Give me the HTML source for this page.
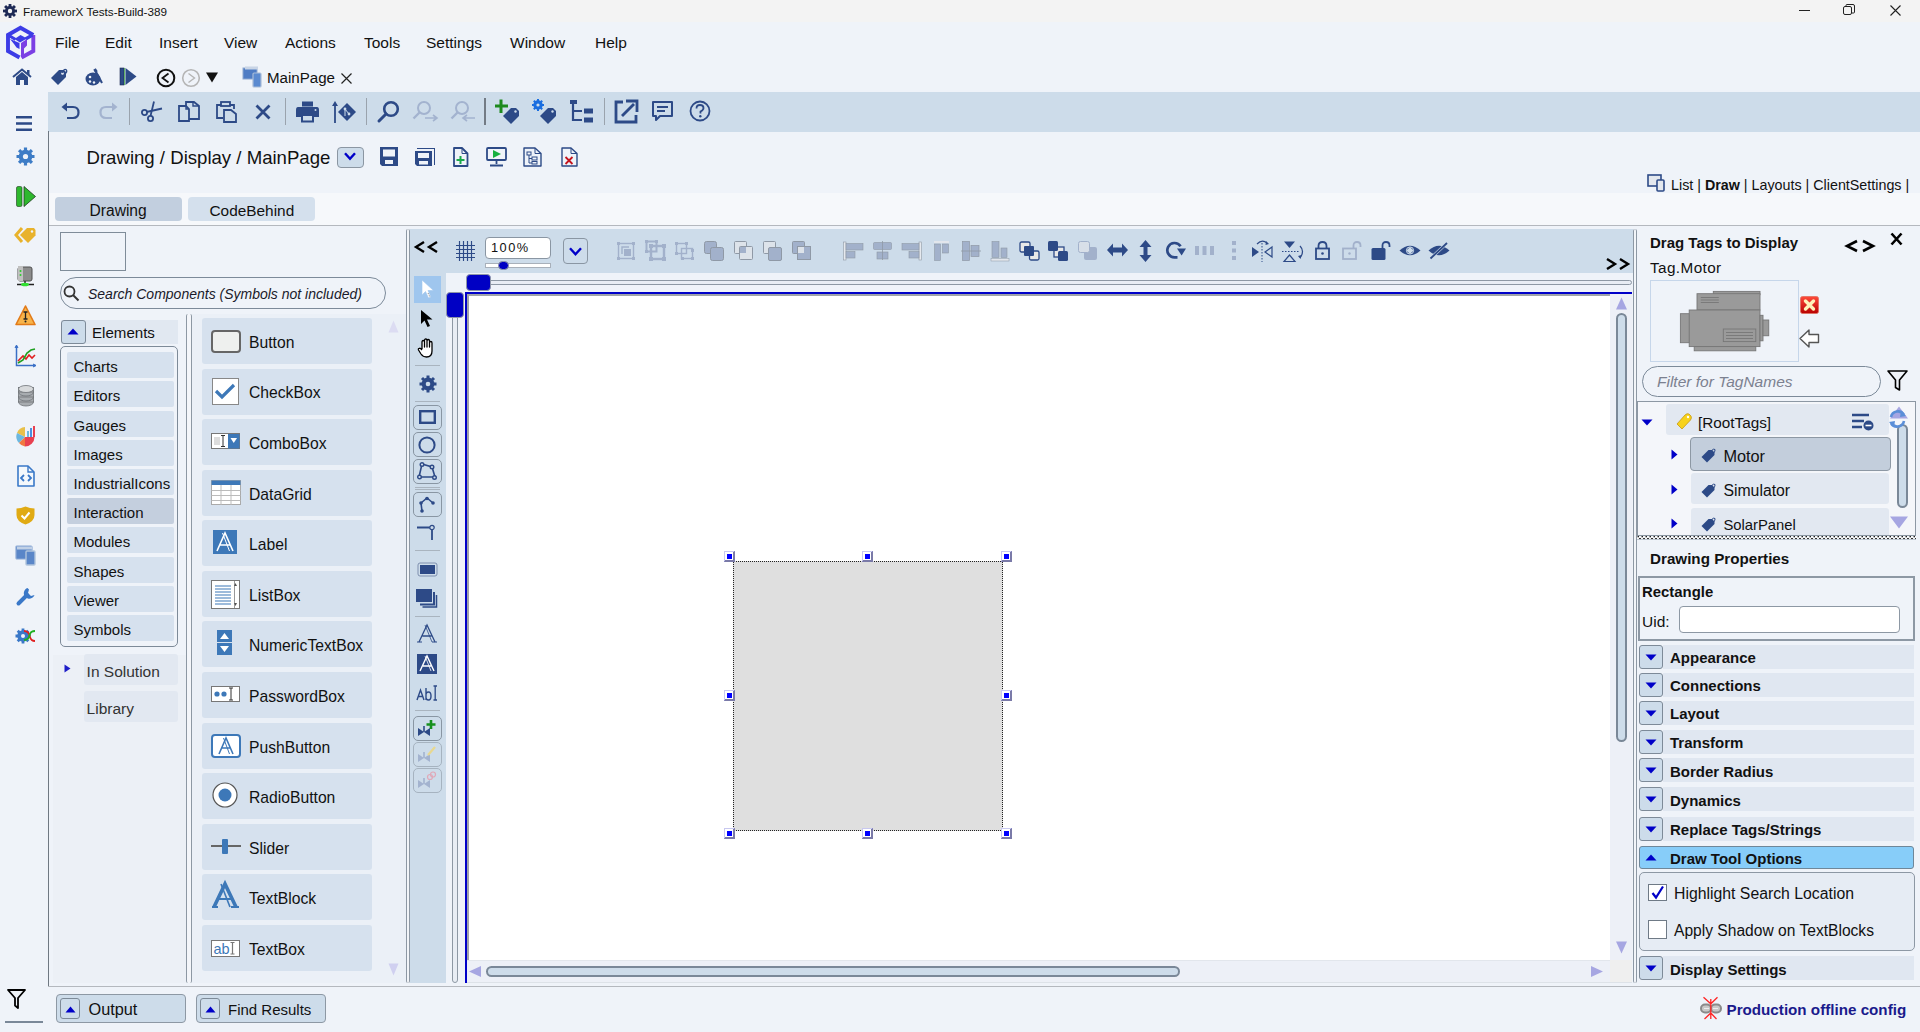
<!DOCTYPE html>
<html><head><meta charset="utf-8"><title>FrameworX</title>
<style>
html,body{margin:0;padding:0;}
body{width:1920px;height:1032px;position:relative;overflow:hidden;background:#eff3f9;font-family:"Liberation Sans",sans-serif;color:#111;}
body>*{position:absolute;}
.t{line-height:1;white-space:nowrap;}
svg{overflow:visible;}
</style></head><body>
<div style="left:0px;top:0px;width:1920px;height:22px;background:#f3f3f3"></div>
<div style="left:0px;top:22px;width:1920px;height:1010px;background:#eff3f9"></div>
<div style="left:48px;top:92px;width:1872px;height:40px;background:#cddcea"></div>
<div style="left:48px;top:193px;width:1872px;height:32px;background:#f6f8fb"></div>
<div style="left:48px;top:225px;width:1872px;height:1px;background:#b4b8be"></div>
<div style="left:48px;top:131px;width:1px;height:855px;background:#6f7882"></div>
<div style="left:48px;top:986px;width:1872px;height:1px;background:#b4b8be"></div>
<div class="t" style="left:23px;top:6.09px;font-size:11.7px;color:#111">FrameworX Tests-Build-389</div>
<svg style="left:3px;top:4px" width="14" height="14" viewBox="0 0 14 14"><g fill="#1e2a55"><circle cx="7" cy="7" r="5"/><rect x="5.6" y="0" width="2.8" height="14"/><rect x="0" y="5.6" width="14" height="2.8"/><rect x="5.6" y="0" width="2.8" height="14" transform="rotate(45 7 7)"/><rect x="5.6" y="0" width="2.8" height="14" transform="rotate(-45 7 7)"/></g><circle cx="7" cy="7" r="2.2" fill="#f3f3f3"/></svg>
<div style="left:1799px;top:10px;width:11px;height:1px;background:#222"></div>
<svg style="left:1843px;top:4px" width="12" height="12" viewBox="0 0 12 12"><rect x="0.5" y="2.5" width="8" height="8" rx="1.5" fill="none" stroke="#222"/><path d="M3 2.5 V1.5 Q3 0.5 4 0.5 H10 Q11.5 0.5 11.5 2 V8 Q11.5 9 10.5 9 H9" fill="none" stroke="#222"/></svg>
<svg style="left:1890px;top:5px" width="11" height="11" viewBox="0 0 11 11"><path d="M0.5 0.5 L10.5 10.5 M10.5 0.5 L0.5 10.5" stroke="#222" stroke-width="1.1"/></svg>
<div class="t" style="left:55px;top:34.88px;font-size:15.5px;">File</div>
<div class="t" style="left:105px;top:34.88px;font-size:15.5px;">Edit</div>
<div class="t" style="left:159px;top:34.88px;font-size:15.5px;">Insert</div>
<div class="t" style="left:224px;top:34.88px;font-size:15.5px;">View</div>
<div class="t" style="left:285px;top:34.88px;font-size:15.5px;">Actions</div>
<div class="t" style="left:364px;top:34.88px;font-size:15.5px;">Tools</div>
<div class="t" style="left:426px;top:34.88px;font-size:15.5px;">Settings</div>
<div class="t" style="left:510px;top:34.88px;font-size:15.5px;">Window</div>
<div class="t" style="left:595px;top:34.88px;font-size:15.5px;">Help</div>
<svg style="left:0px;top:22px" width="42" height="40" viewBox="0 0 42 40"><g fill="none" stroke-width="3.9" stroke-linejoin="miter"><path d="M19.5 35.5 L8 29 V13 L20.5 5.8 L33.3 13" stroke="#3c3ce6"/><path d="M21.5 35.5 L33.3 29 V13" stroke="#7b3fe4"/><path d="M9 13.5 L15.5 17.5" stroke="#3c3ce6" stroke-width="3.2"/><path d="M25.5 17 L32.5 13" stroke="#3c3ce6" stroke-width="3.2"/></g><path d="M14.5 17 L20.5 13 L27 16.5 L20 20.5 Z" fill="#3c3ce6"/><path d="M10 17 L19.5 21 V27 L16.5 25.5 L14 22 Z" fill="#3c3ce6"/><path d="M21 21 L27 17 V23.5 L24 26.5 V34 L21 35.5 Z" fill="#7b3fe4"/></svg>
<svg style="left:12px;top:68px" width="20" height="18" viewBox="0 0 20 18"><path d="M1 9 L10 1.5 L19 9" fill="none" stroke="#2d4a87" stroke-width="2"/><path d="M4 9 L10 4 L16 9 V17 H12 V12 H8 V17 H4 Z" fill="#2d4a87"/><rect x="15" y="2" width="2.5" height="5" fill="#2d4a87"/></svg>
<svg style="left:50px;top:68px" width="18" height="18" viewBox="0 0 18 18"><path d="M1 10 L9 2 H14 L16 4 V9 L8 17 Z" fill="#2d4a87"/><circle cx="12.5" cy="5.5" r="1.3" fill="#eff3f9"/><path d="M12 5 Q14 0 16.5 2 Q17.5 4 15 6" fill="none" stroke="#2d4a87" stroke-width="1.2"/></svg>
<svg style="left:85px;top:68px" width="18" height="18" viewBox="0 0 18 18"><ellipse cx="8" cy="11" rx="7.5" ry="6.5" fill="#2d4a87"/><circle cx="5" cy="9" r="1.3" fill="#eff3f9"/><circle cx="5" cy="13.5" r="1.2" fill="#eff3f9"/><circle cx="9" cy="14.5" r="1.2" fill="#eff3f9"/><path d="M10 2 L17 15" stroke="#2d4a87" stroke-width="2"/><path d="M9.5 1 L11.5 4" stroke="#2d4a87" stroke-width="3"/></svg>
<svg style="left:120px;top:68px" width="17" height="17" viewBox="0 0 17 17"><rect x="0" y="0" width="4" height="17" fill="#2d4a87" stroke="#1a2a50" stroke-width="0.6"/><rect x="4.3" y="0" width="0.8" height="17" fill="#40b040"/><path d="M5.5 0 L16.5 8.5 L5.5 17 Z" fill="#2d4a87"/></svg>
<svg style="left:156px;top:68px" width="20" height="20" viewBox="0 0 20 20"><circle cx="10" cy="10" r="8.3" fill="none" stroke="#111" stroke-width="2"/><path d="M12.5 5.5 L6.5 10 L12.5 14.5" fill="none" stroke="#111" stroke-width="1.8"/></svg>
<svg style="left:181px;top:68px" width="20" height="20" viewBox="0 0 20 20"><circle cx="10" cy="10" r="8.3" fill="none" stroke="#b5b5b5" stroke-width="1.6"/><path d="M7.5 5.5 L13.5 10 L7.5 14.5" fill="none" stroke="#b5b5b5" stroke-width="1.4"/></svg>
<svg style="left:206px;top:72px" width="12" height="11" viewBox="0 0 12 11"><path d="M0 0.5 H12 L6 10.5 Z" fill="#111"/></svg>
<svg style="left:242px;top:66px" width="21" height="22" viewBox="0 0 21 22"><rect x="1" y="2" width="14" height="11" fill="#4f7cc4" stroke="#8da7d0"/><rect x="3" y="0.5" width="13" height="3" fill="#c8d4e6"/><rect x="11" y="7" width="8" height="14" rx="1" fill="#5b8ad0" stroke="#a8bcd8" stroke-width="1.2"/></svg>
<div class="t" style="left:267px;top:70.21px;font-size:15.1px;">MainPage</div>
<svg style="left:341px;top:73px" width="11" height="11" viewBox="0 0 11 11"><path d="M0.5 0.5 L10.5 10.5 M10.5 0.5 L0.5 10.5" stroke="#222" stroke-width="1.2"/></svg>
<svg style="left:61px;top:102px" width="19" height="17" viewBox="0 0 19 17"><path d="M4 5 H12 Q17.5 5 17.5 10.5 Q17.5 16 12 16 H6" fill="none" stroke="#2d4a87" stroke-width="2.2"/><path d="M0.5 5 L6 0.5 V9.5 Z" fill="#2d4a87"/></svg>
<svg style="left:99px;top:102px" width="19" height="17" viewBox="0 0 19 17"><path d="M15 5 H7 Q1.5 5 1.5 10.5 Q1.5 16 7 16 H13" fill="none" stroke="#a3b3cf" stroke-width="2.2"/><path d="M18.5 5 L13 0.5 V9.5 Z" fill="#a3b3cf"/></svg>
<div style="left:129px;top:98px;width:1px;height:27px;background:#9aa3ad"></div>
<svg style="left:141px;top:101px" width="22" height="21" viewBox="0 0 22 21"><circle cx="3.5" cy="11.5" r="2.6" fill="none" stroke="#2d4a87" stroke-width="1.8"/><circle cx="9.5" cy="17.5" r="2.6" fill="none" stroke="#2d4a87" stroke-width="1.8"/><path d="M5.5 11 L21 7.5 M9.5 15 L13 0.5" stroke="#2d4a87" stroke-width="1.8"/></svg>
<svg style="left:178px;top:101px" width="22" height="21" viewBox="0 0 22 21"><path d="M1 5 H8 L11 8 V20 H1 Z" fill="none" stroke="#2d4a87" stroke-width="1.8"/><path d="M8 5 V8 H11" fill="none" stroke="#2d4a87" stroke-width="1.4"/><path d="M8 5 V1 H16 L21 5 V18 H11" fill="none" stroke="#2d4a87" stroke-width="1.8"/><path d="M15 1 V5 H21" fill="none" stroke="#2d4a87" stroke-width="1.4"/></svg>
<svg style="left:216px;top:101px" width="22" height="22" viewBox="0 0 22 22"><path d="M5 4 H1 V17 H7" fill="none" stroke="#2d4a87" stroke-width="1.8"/><rect x="5" y="1" width="9" height="4" fill="none" stroke="#2d4a87" stroke-width="1.8"/><path d="M14 4 H18 V8" fill="none" stroke="#2d4a87" stroke-width="1.8"/><path d="M8 9 H15 L20 13 V21 H8 Z" fill="none" stroke="#2d4a87" stroke-width="1.8"/></svg>
<svg style="left:255px;top:104px" width="16" height="16" viewBox="0 0 16 16"><path d="M1.5 1.5 L14.5 14.5 M14.5 1.5 L1.5 14.5" stroke="#2d4a87" stroke-width="2.8"/></svg>
<div style="left:285px;top:98px;width:1px;height:27px;background:#9aa3ad"></div>
<svg style="left:296px;top:101px" width="23" height="21" viewBox="0 0 23 21"><rect x="6" y="0.5" width="11" height="5" fill="#2d4a87"/><path d="M2 6 H21 Q23 6 23 9 V16 H18 V13 H5 V16 H0 V9 Q0 6 2 6 Z" fill="#2d4a87"/><rect x="6" y="14" width="11" height="6.5" fill="none" stroke="#2d4a87" stroke-width="2"/><circle cx="19.5" cy="9" r="1" fill="#cddcea"/></svg>
<svg style="left:332px;top:101px" width="25" height="22" viewBox="0 0 25 22"><path d="M3 22 V3" stroke="#2d4a87" stroke-width="1.8"/><path d="M0 5 L3 0 L6 5 Z" fill="#2d4a87"/><path d="M15 2 L24 11 L15 20 L6 11 Z" fill="#2d4a87"/><circle cx="13" cy="8" r="1.4" fill="#cddcea"/><circle cx="17" cy="13" r="1.4" fill="#cddcea"/><path d="M13 8 V15 M13 8 L17 13" stroke="#cddcea" stroke-width="1"/></svg>
<div style="left:366px;top:98px;width:1px;height:27px;background:#9aa3ad"></div>
<svg style="left:377px;top:100px" width="23" height="23" viewBox="0 0 23 23"><circle cx="14" cy="9" r="6.8" fill="none" stroke="#2d4a87" stroke-width="2.6"/><path d="M9 14 L2 21" stroke="#2d4a87" stroke-width="3" stroke-linecap="round"/></svg>
<svg style="left:412px;top:100px" width="27" height="23" viewBox="0 0 27 23"><circle cx="12" cy="8" r="6" fill="none" stroke="#a3b3cf" stroke-width="2"/><path d="M7.5 12.5 L1.5 18.5" stroke="#a3b3cf" stroke-width="2.4"/><path d="M13 18 H24 M21 15 L25 18 L21 21" fill="none" stroke="#a3b3cf" stroke-width="1.6"/></svg>
<svg style="left:450px;top:100px" width="27" height="23" viewBox="0 0 27 23"><circle cx="12" cy="8" r="6" fill="none" stroke="#a3b3cf" stroke-width="2"/><path d="M7.5 12.5 L1.5 18.5" stroke="#a3b3cf" stroke-width="2.4"/><path d="M14 18 H25 M17 15 L13 18 L17 21" fill="none" stroke="#a3b3cf" stroke-width="1.6"/></svg>
<div style="left:484px;top:98px;width:2px;height:27px;background:#737b85"></div>
<svg style="left:495px;top:99px" width="25" height="26" viewBox="0 0 25 26"><path d="M6 0.5 V14 M0 7 H13" stroke="#1e8a1e" stroke-width="3"/><path d="M8 17 L16 9 H21 L24 12 V17 L16 25 Z" fill="#2d4a87"/><circle cx="20.5" cy="12.5" r="1.2" fill="#cddcea"/></svg>
<svg style="left:532px;top:99px" width="25" height="26" viewBox="0 0 25 26"><circle cx="6" cy="6" r="3.4" fill="none" stroke="#1a6ee0" stroke-width="2.6"/><g stroke="#1a6ee0" stroke-width="2"><path d="M6 0 V12 M0 6 H12 M1.8 1.8 L10.2 10.2 M10.2 1.8 L1.8 10.2"/></g><circle cx="6" cy="6" r="1.6" fill="#cddcea"/><path d="M8 17 L16 9 H21 L24 12 V17 L16 25 Z" fill="#2d4a87"/><circle cx="20.5" cy="12.5" r="1.2" fill="#cddcea"/></svg>
<svg style="left:570px;top:100px" width="24" height="23" viewBox="0 0 24 23"><rect x="0" y="0" width="7" height="4" fill="#2d4a87"/><path d="M3 4 V20 H12 M3 11 H12" fill="none" stroke="#2d4a87" stroke-width="2.2"/><rect x="14" y="8.5" width="9" height="5" fill="#2d4a87"/><rect x="14" y="17.5" width="9" height="5" fill="#2d4a87"/></svg>
<div style="left:604px;top:98px;width:1px;height:27px;background:#9aa3ad"></div>
<svg style="left:614px;top:100px" width="24" height="24" viewBox="0 0 24 24"><path d="M9 2 H2 V22 H22 V15" fill="none" stroke="#2d4a87" stroke-width="2.8"/><path d="M8 16 L20 4" stroke="#2d4a87" stroke-width="2.8"/><path d="M12 1 H23 V12" fill="none" stroke="#2d4a87" stroke-width="2.8"/></svg>
<svg style="left:651px;top:101px" width="23" height="21" viewBox="0 0 23 21"><path d="M2 1 H21 V15 H9 L5 19 V15 H2 Z" fill="none" stroke="#2d4a87" stroke-width="2" stroke-linejoin="round"/><path d="M6 6 H17 M6 10 H14" stroke="#2d4a87" stroke-width="2"/></svg>
<svg style="left:689px;top:100px" width="22" height="22" viewBox="0 0 22 22"><circle cx="11" cy="11" r="9.5" fill="none" stroke="#2d4a87" stroke-width="1.8"/><path d="M7.5 8.5 Q7.5 5 11 5 Q14.5 5 14.5 8 Q14.5 10 11.5 11.5 V13.5" fill="none" stroke="#2d4a87" stroke-width="1.8"/><circle cx="11.3" cy="16.3" r="1.2" fill="#2d4a87"/></svg>
<div class="t" style="left:86.5px;top:149.25px;font-size:18.6px;color:#111">Drawing / Display / MainPage</div>
<div style="left:337px;top:147px;width:25px;height:19px;background:#cddcea;border:1px solid #8b96a2;border-radius:4px"></div>
<svg style="left:344px;top:152px" width="12" height="9" viewBox="0 0 12 9"><path d="M1 1.2 L6 6.8 L11 1.2" fill="none" stroke="#0000c8" stroke-width="2.4"/></svg>
<svg style="left:380px;top:147px" width="18" height="19" viewBox="0 0 18 19"><path d="M0 0 H18 V19 H2 L0 17 Z" fill="#2d4a87"/><rect x="3" y="2.5" width="12" height="7" fill="#eff3f9"/><rect x="5" y="13" width="8" height="4" fill="#eff3f9"/></svg>
<svg style="left:415px;top:147px" width="20" height="19" viewBox="0 0 20 19"><path d="M2 1 H20 V18 H19 V2 H2 Z" fill="#2d4a87"/><path d="M0 4 H17 V19 H2 L0 17 Z" fill="#2d4a87"/><rect x="3" y="6" width="11" height="5" fill="#eff3f9"/><rect x="4" y="14" width="9" height="3.5" fill="#eff3f9"/></svg>
<svg style="left:453px;top:147px" width="16" height="20" viewBox="0 0 16 20"><path d="M1 1 H9 L14.5 6.5 V19 H1 Z" fill="none" stroke="#2d4a87" stroke-width="1.8" stroke-linejoin="round"/><path d="M9 1 V6.5 H14.5" fill="none" stroke="#2d4a87" stroke-width="1"/><path d="M7.5 9 V17 M3.5 13 H11.5" stroke="#1aa84a" stroke-width="2"/></svg>
<svg style="left:486px;top:147px" width="21" height="20" viewBox="0 0 21 20"><rect x="1" y="1" width="19" height="12" rx="1" fill="none" stroke="#2d4a87" stroke-width="1.8"/><path d="M7 3 L15 7 L7 11 Z" fill="#16b040"/><path d="M10.5 13 V17 M4 18.5 H17" stroke="#2d4a87" stroke-width="1.8"/></svg>
<svg style="left:523px;top:147px" width="19" height="20" viewBox="0 0 19 20"><path d="M1 1 H12 L18 6.5 V19 H1 Z" fill="none" stroke="#2d4a87" stroke-width="1.4" stroke-linejoin="round"/><path d="M12 1 V6.5 H18" fill="none" stroke="#2d4a87" stroke-width="1"/><rect x="4" y="5" width="4" height="3" fill="none" stroke="#2d4a87"/><rect x="9" y="10" width="5" height="3" fill="none" stroke="#2d4a87"/><rect x="9" y="14.5" width="5" height="2.5" fill="none" stroke="#2d4a87"/><path d="M6 8 V16 H9 M6 11.5 H9" fill="none" stroke="#2d4a87"/></svg>
<svg style="left:561px;top:147px" width="17" height="20" viewBox="0 0 17 20"><path d="M1 1 H10 L16 6.5 V19 H1 Z" fill="none" stroke="#2d4a87" stroke-width="1.4" stroke-linejoin="round"/><path d="M10 1 V6.5 H16" fill="none" stroke="#2d4a87" stroke-width="1"/><path d="M4.5 10 L11.5 17 M11.5 10 L4.5 17" stroke="#c4141e" stroke-width="1.8"/></svg>
<svg style="left:1647px;top:174px" width="19" height="18" viewBox="0 0 19 18"><rect x="1" y="1" width="13" height="11" fill="#e4e8ee" stroke="#2d4a87" stroke-width="1.6"/><rect x="10" y="6" width="7" height="11" rx="1" fill="#e4e8ee" stroke="#2d4a87" stroke-width="1.6"/></svg>
<div class="t" style="left:1671px;top:177.89px;font-size:14.3px;color:#111;white-space:pre">List | <b>Draw</b> | Layouts | ClientSettings |</div>
<div style="left:55px;top:197px;width:127px;height:24px;background:#c2cfdf;border-radius:4px"></div>
<div style="left:188px;top:197px;width:127px;height:24px;background:#d4e0ed;border-radius:4px"></div>
<div class="t" style="left:89.5px;top:202.79px;font-size:15.6px;">Drawing</div>
<div class="t" style="left:209.5px;top:202.96px;font-size:15.4px;">CodeBehind</div>
<svg style="left:16px;top:116px" width="17" height="15" viewBox="0 0 17 15"><path d="M0 1.2 H16 M0 7.5 H16 M0 13.8 H16" stroke="#2d4a87" stroke-width="2.4"/></svg>
<svg style="left:16px;top:147px" width="19" height="19" viewBox="0 0 19 19"><g fill="none" stroke="#3d7cc6"><circle cx="9.5" cy="9.5" r="5" stroke-width="3.6"/><path d="M9.5 0.5 V18.5 M0.5 9.5 H18.5 M3.1 3.1 L15.9 15.9 M15.9 3.1 L3.1 15.9" stroke-width="3.2"/></g><circle cx="9.5" cy="9.5" r="2.6" fill="#eff3f9"/></svg>
<svg style="left:16px;top:186px" width="20" height="21" viewBox="0 0 20 21"><rect x="0.5" y="0.5" width="5.5" height="20" rx="1.5" fill="#2eb82e" stroke="#1f3a1f" stroke-width="0.6"/><path d="M8 0.5 L19.5 10.5 L8 20.5 Z" fill="#2eb82e" stroke="#1f3a1f" stroke-width="0.8"/></svg>
<svg style="left:15px;top:227px" width="21" height="17" viewBox="0 0 21 17"><path d="M7 1 L1 8 L7 15" fill="none" stroke="#e8b22c" stroke-width="3"/><path d="M5 8 L12 1 H19 L20.5 3 V8.5 L13 16 Z" fill="#e8b22c"/><circle cx="17" cy="4.5" r="1.2" fill="#eff3f9"/></svg>
<svg style="left:16px;top:265px" width="19" height="22" viewBox="0 0 19 22"><rect x="2" y="2" width="14" height="14" rx="2" fill="#8c8c8c" stroke="#505050" stroke-width="1"/><rect x="2" y="1" width="5" height="15" fill="#c0c0c0"/><circle cx="4.5" cy="6" r="1" fill="#2ccc2c"/><circle cx="4.5" cy="10" r="1" fill="#2ccc2c"/><path d="M9 16 V19 M1 19.5 H18" stroke="#222" stroke-width="1.4"/><ellipse cx="9" cy="19.5" rx="4" ry="1.8" fill="#30e030"/></svg>
<svg style="left:15px;top:305px" width="21" height="21" viewBox="0 0 21 21"><path d="M10.5 1 L20 19.5 H1 Z" fill="#f7b34a" stroke="#e27a18" stroke-width="1.6" stroke-linejoin="round"/><path d="M10.5 7 V14 M8.5 7 H12.5 M8.5 14 H12.5" stroke="#222" stroke-width="1.3"/><circle cx="10.5" cy="16.5" r="1" fill="#222"/></svg>
<svg style="left:15px;top:345px" width="21" height="22" viewBox="0 0 21 22"><path d="M1.5 1 V20.5 H20.5" fill="none" stroke="#3a6fc6" stroke-width="1.5"/><path d="M0 3 L1.5 0 L3 3 M18 19 L21 20.5 L18 22" fill="#3a6fc6" stroke="#3a6fc6" stroke-width="1"/><path d="M3 16 L8 11 L11 14 L14 10 L17 13 L20 10" fill="none" stroke="#e02020" stroke-width="1.6"/><path d="M3 18 L8 15 L12 8 L16 5 L20 4" fill="none" stroke="#20a020" stroke-width="1.6"/></svg>
<svg style="left:18px;top:385px" width="16" height="22" viewBox="0 0 16 22"><g fill="#a8acb0" stroke="#707478" stroke-width="0.8"><ellipse cx="8" cy="17" rx="7.5" ry="4"/><rect x="0.5" y="12" width="15" height="5"/><ellipse cx="8" cy="12" rx="7.5" ry="4"/><rect x="0.5" y="7" width="15" height="5"/><ellipse cx="8" cy="7" rx="7.5" ry="4"/><rect x="0.5" y="2.5" width="15" height="4.5"/></g><ellipse cx="8" cy="4" rx="7.5" ry="3.5" fill="#d8dadc" stroke="#707478" stroke-width="0.8"/></svg>
<svg style="left:16px;top:425px" width="20" height="22" viewBox="0 0 20 22"><path d="M9 12 V2 A9.5 9.5 0 0 0 1 8 Z" fill="#e8c04a"/><path d="M9 12 L1 8 A9.5 9.5 0 0 0 3 18 Z" fill="#6cb8e0"/><path d="M9 12 L3 18 A9.5 9.5 0 0 0 9 21.5 Z" fill="#f07840"/><path d="M9 12 H18.5 A9.5 9.5 0 0 1 9 21.5 Z" fill="#e84050"/><rect x="11" y="6" width="2" height="6" fill="#6cb8e0"/><rect x="14" y="3" width="2" height="9" fill="#4a90e0"/><rect x="17" y="1" width="2" height="11" fill="#e84050"/></svg>
<svg style="left:17px;top:465px" width="18" height="22" viewBox="0 0 18 22"><path d="M1 1 H11 L17 7 V21 H1 Z" fill="#f4f8fc" stroke="#3a78c8" stroke-width="1.6" stroke-linejoin="round"/><path d="M11 1 V7 H17" fill="none" stroke="#3a78c8" stroke-width="1.4"/><path d="M7 10 L4 13 L7 16 M11 10 L14 13 L11 16" fill="none" stroke="#3a78c8" stroke-width="1.8"/></svg>
<svg style="left:16px;top:506px" width="19" height="19" viewBox="0 0 19 19"><path d="M9.5 0.5 Q14 2.5 18.5 2.5 V9 Q18.5 15.5 9.5 18.5 Q0.5 15.5 0.5 9 V2.5 Q5 2.5 9.5 0.5 Z" fill="#e0aa14"/><path d="M5.5 9.5 L8.5 12.5 L13.5 6.5" fill="none" stroke="#fff" stroke-width="2"/></svg>
<svg style="left:15px;top:545px" width="21" height="21" viewBox="0 0 21 21"><rect x="1" y="1" width="16" height="13" rx="1" fill="#5a86c8" stroke="#8aa8d4" stroke-width="1.2"/><rect x="2" y="1.5" width="15" height="3" fill="#c0d0e6"/><rect x="11" y="6" width="9" height="14" rx="1" fill="#5a86c8" stroke="#b0c4dc" stroke-width="1.4"/></svg>
<svg style="left:16px;top:585px" width="20" height="21" viewBox="0 0 20 21"><path d="M2.5 18.5 L11 10" stroke="#3a78c8" stroke-width="4" stroke-linecap="round"/><path d="M11.5 3 A5.5 5.5 0 1 0 18.5 10 L15 11 L12 8 L13 4.5 Z" fill="#3a78c8"/></svg>
<svg style="left:15px;top:625px" width="21" height="21" viewBox="0 0 21 21"><g fill="none" stroke="#3a78c8"><circle cx="8" cy="11" r="4.2" stroke-width="3.2"/><path d="M8 3.5 V18.5 M0.5 11 H15.5 M2.7 5.7 L13.3 16.3 M13.3 5.7 L2.7 16.3" stroke-width="2.8"/></g><circle cx="8" cy="11" r="2" fill="#eff3f9"/><path d="M9 6 Q14 6 15 12 Q16 16 20 16" fill="none" stroke="#e02020" stroke-width="1.8"/><path d="M9 15 Q14 15 15 9 Q16 6 20 6" fill="none" stroke="#20b020" stroke-width="1.8"/></svg>
<div style="left:60px;top:232px;width:66px;height:39px;border:1px solid #7f8c99;box-sizing:border-box"></div>
<div style="left:60px;top:277px;width:326px;height:32px;border:1px solid #7c8a99;border-radius:16px;box-sizing:border-box"></div>
<svg style="left:63px;top:285px" width="17" height="16" viewBox="0 0 17 16"><circle cx="6.5" cy="6.5" r="5" fill="none" stroke="#333" stroke-width="1.8"/><path d="M10 10 L15.5 15.5" stroke="#333" stroke-width="2"/></svg>
<div class="t" style="left:88px;top:286.75px;font-size:14px;font-style:italic;color:#1a1a2a">Search Components (Symbols not included)</div>
<div style="left:61px;top:320px;width:117px;height:24px;background:#e1e8f1"></div>
<div style="left:61px;top:320px;width:25px;height:24px;background:#cddcea;border:1px solid #7d8a98;border-radius:3px;box-sizing:border-box"></div>
<svg style="left:67px;top:328px" width="12" height="7" viewBox="0 0 12 7"><path d="M0.5 6.5 L6 0.5 L11.5 6.5 Z" fill="#0000c8"/></svg>
<div class="t" style="left:92px;top:324.81px;font-size:15.1px;">Elements</div>
<div style="left:60px;top:346px;width:118px;height:301px;border:1px solid #7d8a98;border-radius:5px;box-sizing:border-box"></div>
<div style="left:67px;top:352px;width:107px;height:26px;background:#d6e1ee;border-radius:2px"></div>
<div class="t" style="left:73.5px;top:359.10px;font-size:15px;width:101px;height:20px;overflow:hidden">Charts</div>
<div style="left:67px;top:381px;width:107px;height:26px;background:#d6e1ee;border-radius:2px"></div>
<div class="t" style="left:73.5px;top:388.30px;font-size:15px;width:101px;height:20px;overflow:hidden">Editors</div>
<div style="left:67px;top:411px;width:107px;height:26px;background:#d6e1ee;border-radius:2px"></div>
<div class="t" style="left:73.5px;top:417.50px;font-size:15px;width:101px;height:20px;overflow:hidden">Gauges</div>
<div style="left:67px;top:440px;width:107px;height:26px;background:#d6e1ee;border-radius:2px"></div>
<div class="t" style="left:73.5px;top:446.70px;font-size:15px;width:101px;height:20px;overflow:hidden">Images</div>
<div style="left:67px;top:469px;width:107px;height:26px;background:#d6e1ee;border-radius:2px"></div>
<div class="t" style="left:73.5px;top:475.90px;font-size:15px;width:101px;height:20px;overflow:hidden">IndustrialIcons</div>
<div style="left:67px;top:498px;width:107px;height:26px;background:#c4cfde;border-radius:2px"></div>
<div class="t" style="left:73.5px;top:505.10px;font-size:15px;width:101px;height:20px;overflow:hidden">Interaction</div>
<div style="left:67px;top:527px;width:107px;height:26px;background:#d6e1ee;border-radius:2px"></div>
<div class="t" style="left:73.5px;top:534.30px;font-size:15px;width:101px;height:20px;overflow:hidden">Modules</div>
<div style="left:67px;top:557px;width:107px;height:26px;background:#d6e1ee;border-radius:2px"></div>
<div class="t" style="left:73.5px;top:563.50px;font-size:15px;width:101px;height:20px;overflow:hidden">Shapes</div>
<div style="left:67px;top:586px;width:107px;height:26px;background:#d6e1ee;border-radius:2px"></div>
<div class="t" style="left:73.5px;top:592.70px;font-size:15px;width:101px;height:20px;overflow:hidden">Viewer</div>
<div style="left:67px;top:615px;width:107px;height:26px;background:#d6e1ee;border-radius:2px"></div>
<div class="t" style="left:73.5px;top:621.90px;font-size:15px;width:101px;height:20px;overflow:hidden">Symbols</div>
<div style="left:53px;top:655px;width:133px;height:328px;background:#ecf0f6"></div>
<div style="left:84px;top:654px;width:94px;height:31px;background:#e2e8f1;border-radius:3px"></div>
<div style="left:84px;top:691px;width:94px;height:31px;background:#e2e8f1;border-radius:3px"></div>
<svg style="left:64px;top:664px" width="7" height="9" viewBox="0 0 7 9"><path d="M0.5 0.5 L6.5 4.5 L0.5 8.5 Z" fill="#1e1ec8"/></svg>
<div class="t" style="left:86.6px;top:663.88px;font-size:15.5px;color:#333">In Solution</div>
<div class="t" style="left:86.6px;top:700.88px;font-size:15.5px;color:#333">Library</div>
<div style="left:186px;top:314px;width:6px;height:669px;background:#f4f6fa;border-left:1px solid #8d98a4;border-right:1px solid #8d98a4;border-radius:2px;box-sizing:border-box"></div>
<div style="left:192px;top:314px;width:214px;height:669px;background:#ebf0f7"></div>
<svg style="left:388px;top:320px" width="11" height="13" viewBox="0 0 11 13"><path d="M0.5 12.5 L5.5 0.5 L10.5 12.5 Z" fill="#dcdcf2"/></svg>
<svg style="left:388px;top:963px" width="11" height="13" viewBox="0 0 11 13"><path d="M0.5 0.5 L5.5 12.5 L10.5 0.5 Z" fill="#d0d0f0"/></svg>
<div style="left:202px;top:318px;width:170px;height:46px;background:#d6e1ee;border-radius:3px"></div>
<svg style="left:211px;top:330px" width="30" height="23" viewBox="0 0 30 23"><rect x="1" y="1" width="28" height="21" rx="3" fill="#eef0ee" stroke="#666" stroke-width="2"/></svg>
<div class="t" style="left:249px;top:334.91px;font-size:15.7px;">Button</div>
<div style="left:202px;top:369px;width:170px;height:46px;background:#d6e1ee;border-radius:3px"></div>
<svg style="left:211px;top:378px" width="29" height="28" viewBox="0 0 29 28"><rect x="1.5" y="0.5" width="26" height="26" fill="#fff" stroke="#888"/><path d="M5 13 L11 19 L23 7" fill="none" stroke="#3d78b8" stroke-width="3.2"/></svg>
<div class="t" style="left:249px;top:385.49px;font-size:15.7px;">CheckBox</div>
<div style="left:202px;top:419px;width:170px;height:46px;background:#d6e1ee;border-radius:3px"></div>
<svg style="left:211px;top:429px" width="30" height="22" viewBox="0 0 30 22"><rect x="0.5" y="4.5" width="28" height="15" fill="#fff" stroke="#777"/><rect x="17" y="5" width="11.5" height="14.5" fill="#3d78b8"/><path d="M19.5 9 H26 L22.75 14 Z" fill="#fff"/><rect x="3" y="8" width="6" height="8" fill="#dcdcdc"/><path d="M10 6.5 H14 M12 6.5 V17.5 M10 17.5 H14" stroke="#333" stroke-width="1"/></svg>
<div class="t" style="left:249px;top:436.07px;font-size:15.7px;">ComboBox</div>
<div style="left:202px;top:470px;width:170px;height:46px;background:#d6e1ee;border-radius:3px"></div>
<svg style="left:211px;top:480px" width="30" height="26" viewBox="0 0 30 26"><rect x="0.5" y="0.5" width="29" height="24" fill="#fff" stroke="#aaa"/><rect x="0.5" y="0.5" width="29" height="4.5" fill="#3d78b8"/><path d="M0.5 10.5 H29.5 M0.5 15.5 H29.5 M0.5 20.5 H29.5 M10 5 V25 M20 5 V25" stroke="#bbb" stroke-width="1"/></svg>
<div class="t" style="left:249px;top:486.65px;font-size:15.7px;">DataGrid</div>
<div style="left:202px;top:520px;width:170px;height:46px;background:#d6e1ee;border-radius:3px"></div>
<svg style="left:213px;top:530px" width="25" height="25" viewBox="0 0 25 25"><rect x="0" y="0" width="24" height="24" fill="#3d78b8"/><path d="M4 21 L12 3 L20 21 M7 15 H17" fill="none" stroke="#fff" stroke-width="1.6"/><path d="M9.5 3 L16.5 21" stroke="#fff" stroke-width="1"/></svg>
<div class="t" style="left:249px;top:537.23px;font-size:15.7px;">Label</div>
<div style="left:202px;top:571px;width:170px;height:46px;background:#d6e1ee;border-radius:3px"></div>
<svg style="left:211px;top:580px" width="30" height="30" viewBox="0 0 30 30"><rect x="0.5" y="0.5" width="28" height="28" fill="#fff" stroke="#777"/><path d="M4 6 H20 M4 9 H20 M4 12 H20 M4 15 H20 M4 18 H20 M4 21 H20 M4 24 H20" stroke="#3d78b8" stroke-width="1.2"/><path d="M23.5 1 V28" stroke="#999"/><path d="M24.5 3 L26 6 H23 Z M24.5 26 L26 23 H23 Z" fill="#555"/></svg>
<div class="t" style="left:249px;top:587.81px;font-size:15.7px;">ListBox</div>
<div style="left:202px;top:621px;width:170px;height:46px;background:#d6e1ee;border-radius:3px"></div>
<svg style="left:214px;top:629px" width="21" height="27" viewBox="0 0 21 27"><rect x="3" y="1" width="15" height="12" fill="#3d78b8"/><rect x="3" y="14" width="15" height="12" fill="#3d78b8"/><path d="M6 10 L10.5 4 L15 10 Z M6 17 H15 L10.5 23 Z" fill="#fff"/></svg>
<div class="t" style="left:249px;top:638.39px;font-size:15.7px;">NumericTextBox</div>
<div style="left:202px;top:672px;width:170px;height:46px;background:#d6e1ee;border-radius:3px"></div>
<svg style="left:211px;top:683px" width="30" height="21" viewBox="0 0 30 21"><rect x="0.5" y="3.5" width="28" height="15" fill="#fff" stroke="#777"/><circle cx="6" cy="11" r="2.6" fill="#3d78b8"/><circle cx="13" cy="11" r="2.6" fill="#3d78b8"/><path d="M18 5 H22 M20 5 V17 M18 17 H22" stroke="#333" stroke-width="1"/></svg>
<div class="t" style="left:249px;top:688.97px;font-size:15.7px;">PasswordBox</div>
<div style="left:202px;top:723px;width:170px;height:46px;background:#d6e1ee;border-radius:3px"></div>
<svg style="left:211px;top:734px" width="30" height="25" viewBox="0 0 30 25"><rect x="1" y="1" width="28" height="22" rx="3" fill="#fff" stroke="#3d78b8" stroke-width="2"/><path d="M8 20 L15 4 L22 20 M10 14 H20" fill="none" stroke="#3d78b8" stroke-width="1.6"/><path d="M12.5 4 L18.5 20" stroke="#3d78b8" stroke-width="1"/></svg>
<div class="t" style="left:249px;top:739.55px;font-size:15.7px;">PushButton</div>
<div style="left:202px;top:773px;width:170px;height:46px;background:#d6e1ee;border-radius:3px"></div>
<svg style="left:212px;top:782px" width="27" height="27" viewBox="0 0 27 27"><circle cx="13" cy="13" r="12" fill="#fff" stroke="#555" stroke-width="1.2"/><circle cx="13" cy="13" r="6.5" fill="#3d78b8"/></svg>
<div class="t" style="left:249px;top:790.13px;font-size:15.7px;">RadioButton</div>
<div style="left:202px;top:824px;width:170px;height:46px;background:#d6e1ee;border-radius:3px"></div>
<svg style="left:211px;top:838px" width="30" height="17" viewBox="0 0 30 17"><path d="M0 8 H30" stroke="#666" stroke-width="2"/><rect x="11" y="1" width="6" height="15" rx="1" fill="#3d78b8"/></svg>
<div class="t" style="left:249px;top:840.71px;font-size:15.7px;">Slider</div>
<div style="left:202px;top:874px;width:170px;height:46px;background:#d6e1ee;border-radius:3px"></div>
<svg style="left:212px;top:883px" width="28" height="27" viewBox="0 0 28 27"><path d="M2 24 L13 1 L24 24" fill="none" stroke="#3d78b8" stroke-width="3.6"/><path d="M9 1 L18 24" stroke="#3d78b8" stroke-width="1.6"/><path d="M6 16 H20" stroke="#3d78b8" stroke-width="2"/><path d="M0 24 H6 M19 24 H27" stroke="#3d78b8" stroke-width="2"/></svg>
<div class="t" style="left:249px;top:891.29px;font-size:15.7px;">TextBlock</div>
<div style="left:202px;top:925px;width:170px;height:46px;background:#d6e1ee;border-radius:3px"></div>
<svg style="left:211px;top:940px" width="30" height="19" viewBox="0 0 30 19"><rect x="0.5" y="0.5" width="28" height="16" fill="#fff" stroke="#777"/><text x="2.5" y="13.5" font-family="Liberation Sans" font-size="14.5" fill="#3d78b8">ab</text><path d="M19.5 2.5 H23.5 M21.5 2.5 V14 M19.5 14 H23.5" stroke="#777" stroke-width="1.2"/></svg>
<div class="t" style="left:249px;top:941.87px;font-size:15.7px;">TextBox</div>
<div style="left:406px;top:229px;width:4px;height:754px;background:#f2f5f9;border-left:1px solid #8d98a4;border-right:1px solid #8d98a4;border-radius:2px;box-sizing:border-box"></div>
<div style="left:410px;top:229px;width:1223px;height:44px;background:#cddcea"></div>
<div style="left:410px;top:273px;width:36px;height:710px;background:#cddcea"></div>
<div style="left:446px;top:273px;width:1187px;height:710px;background:#eff3f9"></div>
<div style="left:1633px;top:229px;width:4px;height:754px;background:#f2f5f9;border-left:1px solid #8d98a4;border-right:1px solid #8d98a4;border-radius:2px;box-sizing:border-box"></div>
<div style="left:466px;top:280px;width:1166px;height:5px;background:#e8edf4;border:1px solid #8d98a4;border-radius:3px;box-sizing:border-box"></div>
<div style="left:452px;top:317px;width:6px;height:666px;background:#e8edf4;border:1px solid #8d98a4;border-radius:0 0 3px 3px;box-sizing:border-box"></div>
<div style="left:466px;top:274px;width:25px;height:17px;background:#0000c4;border:1px solid #8e96a8;border-radius:4px;box-sizing:border-box"></div>
<div style="left:446px;top:292px;width:18px;height:26px;background:#0000c4;border:1px solid #8e96a8;border-radius:4px;box-sizing:border-box"></div>
<div style="left:465px;top:292px;width:1167px;height:2px;background:#0000c8"></div>
<div style="left:465px;top:292px;width:2px;height:691px;background:#0000c8"></div>
<div style="left:467px;top:294px;width:1143px;height:2px;background:#a0a4a8"></div>
<div style="left:467px;top:294px;width:2px;height:666px;background:#a0a4a8"></div>
<div style="left:469px;top:296px;width:1141px;height:664px;background:#fff"></div>
<div style="left:1610px;top:294px;width:22px;height:666px;background:#edf0f7"></div>
<div style="left:467px;top:960px;width:1143px;height:23px;background:#edf0f7;border-top:1px solid #e2e6ec;box-sizing:border-box"></div>
<div style="left:1610px;top:960px;width:22px;height:23px;background:#efefef"></div>
<div style="left:467px;top:982px;width:1165px;height:1px;background:#dde2e8"></div>
<svg style="left:1616px;top:297px" width="11" height="13" viewBox="0 0 11 13"><path d="M0 12.5 L5.5 0.5 L11 12.5 Z" fill="#a6a6e2"/></svg>
<svg style="left:1616px;top:941px" width="11" height="13" viewBox="0 0 11 13"><path d="M0 0.5 L5.5 12.5 L11 0.5 Z" fill="#a6a6e2"/></svg>
<svg style="left:469px;top:966px" width="12" height="11" viewBox="0 0 12 11"><path d="M12 0 L0 5.5 L12 11 Z" fill="#a6a6e2"/></svg>
<svg style="left:1591px;top:966px" width="12" height="11" viewBox="0 0 12 11"><path d="M0 0 L12 5.5 L0 11 Z" fill="#a6a6e2"/></svg>
<div style="left:1616px;top:313px;width:11px;height:429px;background:#cddcea;border:2px solid #7a8898;border-radius:6px;box-sizing:border-box"></div>
<div style="left:486px;top:966px;width:694px;height:11px;background:#cddcea;border:2px solid #7a8898;border-radius:6px;box-sizing:border-box"></div>
<div style="left:733px;top:561px;width:270px;height:270px;background:#dfdfdf;border:1.5px dotted #222;box-sizing:border-box"></div>
<svg style="left:724px;top:551px" width="11" height="11" viewBox="0 0 11 11"><rect x="0" y="0" width="11" height="11" fill="#8888c0"/><rect x="0" y="0" width="10" height="10" fill="#c8c8f0"/><rect x="1" y="1" width="9" height="9" fill="#fff"/><rect x="9" y="1" width="2" height="10" fill="#7a7aa8"/><rect x="1" y="9" width="10" height="2" fill="#7a7aa8"/><rect x="3" y="3" width="5" height="5" fill="#0000ff"/></svg>
<svg style="left:724px;top:690px" width="11" height="11" viewBox="0 0 11 11"><rect x="0" y="0" width="11" height="11" fill="#8888c0"/><rect x="0" y="0" width="10" height="10" fill="#c8c8f0"/><rect x="1" y="1" width="9" height="9" fill="#fff"/><rect x="9" y="1" width="2" height="10" fill="#7a7aa8"/><rect x="1" y="9" width="10" height="2" fill="#7a7aa8"/><rect x="3" y="3" width="5" height="5" fill="#0000ff"/></svg>
<svg style="left:724px;top:828px" width="11" height="11" viewBox="0 0 11 11"><rect x="0" y="0" width="11" height="11" fill="#8888c0"/><rect x="0" y="0" width="10" height="10" fill="#c8c8f0"/><rect x="1" y="1" width="9" height="9" fill="#fff"/><rect x="9" y="1" width="2" height="10" fill="#7a7aa8"/><rect x="1" y="9" width="10" height="2" fill="#7a7aa8"/><rect x="3" y="3" width="5" height="5" fill="#0000ff"/></svg>
<svg style="left:862px;top:551px" width="11" height="11" viewBox="0 0 11 11"><rect x="0" y="0" width="11" height="11" fill="#8888c0"/><rect x="0" y="0" width="10" height="10" fill="#c8c8f0"/><rect x="1" y="1" width="9" height="9" fill="#fff"/><rect x="9" y="1" width="2" height="10" fill="#7a7aa8"/><rect x="1" y="9" width="10" height="2" fill="#7a7aa8"/><rect x="3" y="3" width="5" height="5" fill="#0000ff"/></svg>
<svg style="left:862px;top:828px" width="11" height="11" viewBox="0 0 11 11"><rect x="0" y="0" width="11" height="11" fill="#8888c0"/><rect x="0" y="0" width="10" height="10" fill="#c8c8f0"/><rect x="1" y="1" width="9" height="9" fill="#fff"/><rect x="9" y="1" width="2" height="10" fill="#7a7aa8"/><rect x="1" y="9" width="10" height="2" fill="#7a7aa8"/><rect x="3" y="3" width="5" height="5" fill="#0000ff"/></svg>
<svg style="left:1001px;top:551px" width="11" height="11" viewBox="0 0 11 11"><rect x="0" y="0" width="11" height="11" fill="#8888c0"/><rect x="0" y="0" width="10" height="10" fill="#c8c8f0"/><rect x="1" y="1" width="9" height="9" fill="#fff"/><rect x="9" y="1" width="2" height="10" fill="#7a7aa8"/><rect x="1" y="9" width="10" height="2" fill="#7a7aa8"/><rect x="3" y="3" width="5" height="5" fill="#0000ff"/></svg>
<svg style="left:1001px;top:690px" width="11" height="11" viewBox="0 0 11 11"><rect x="0" y="0" width="11" height="11" fill="#8888c0"/><rect x="0" y="0" width="10" height="10" fill="#c8c8f0"/><rect x="1" y="1" width="9" height="9" fill="#fff"/><rect x="9" y="1" width="2" height="10" fill="#7a7aa8"/><rect x="1" y="9" width="10" height="2" fill="#7a7aa8"/><rect x="3" y="3" width="5" height="5" fill="#0000ff"/></svg>
<svg style="left:1001px;top:828px" width="11" height="11" viewBox="0 0 11 11"><rect x="0" y="0" width="11" height="11" fill="#8888c0"/><rect x="0" y="0" width="10" height="10" fill="#c8c8f0"/><rect x="1" y="1" width="9" height="9" fill="#fff"/><rect x="9" y="1" width="2" height="10" fill="#7a7aa8"/><rect x="1" y="9" width="10" height="2" fill="#7a7aa8"/><rect x="3" y="3" width="5" height="5" fill="#0000ff"/></svg>
<svg style="left:414px;top:241px" width="26" height="12" viewBox="0 0 26 12"><path d="M10 1 L2 6 L10 11 M23 1 L15 6 L23 11" fill="none" stroke="#000" stroke-width="2.4"/></svg>
<svg style="left:456px;top:241px" width="19" height="20" viewBox="0 0 19 20"><path d="M3.5 0 V20 M7.5 0 V20 M11.5 0 V20 M15.5 0 V20 M0 4.5 H19 M0 8.5 H19 M0 12.5 H19 M0 16.5 H19" stroke="#2d4a87" stroke-width="1.15"/></svg>
<div style="left:485px;top:237px;width:66px;height:22px;background:#fff;border:1px solid #8a96a3;border-radius:4px;box-sizing:border-box"></div>
<div class="t" style="left:491px;top:242.16px;font-size:12.8px;letter-spacing:1.5px">100%</div>
<div style="left:485px;top:263px;width:66px;height:5px;background:#fff;border:1px solid #a8b0ba;box-sizing:border-box"></div>
<div style="left:498px;top:261px;width:11px;height:9px;background:#0000c4;border-radius:5px;border:1px solid #8e96a8;box-sizing:border-box"></div>
<div style="left:563px;top:238px;width:25px;height:26px;background:#cddcea;border:1px solid #8a96a3;border-radius:4px;box-sizing:border-box"></div>
<svg style="left:569px;top:247px" width="13" height="9" viewBox="0 0 13 9"><path d="M1 1.2 L6.5 7.2 L12 1.2" fill="none" stroke="#0000c8" stroke-width="2.4"/></svg>
<svg style="left:1604px;top:258px" width="26" height="12" viewBox="0 0 26 12"><path d="M3 1 L11 6 L3 11 M16 1 L24 6 L16 11" fill="none" stroke="#000" stroke-width="2.4"/></svg>
<svg style="left:617px;top:242px" width="18" height="18" viewBox="0 0 18 18"><rect x="1.5" y="1.5" width="15" height="15" fill="none" stroke="#a2b1cb" stroke-width="1.4"/><rect x="0" y="0" width="3" height="3" fill="#a2b1cb"/><rect x="15" y="0" width="3" height="3" fill="#a2b1cb"/><rect x="0" y="15" width="3" height="3" fill="#a2b1cb"/><rect x="15" y="15" width="3" height="3" fill="#a2b1cb"/><path d="M5 12 V5 H12" fill="none" stroke="#a2b1cb" stroke-width="1.4"/><rect x="7" y="7" width="7" height="7" fill="#a2b1cb"/></svg>
<svg style="left:645px;top:240px" width="21" height="21" viewBox="0 0 21 21"><rect x="1.5" y="1.5" width="10" height="10" fill="none" stroke="#a2b1cb" stroke-width="2"/><rect x="6" y="6" width="13" height="13" fill="none" stroke="#a2b1cb" stroke-width="2.4"/><g fill="#a2b1cb"><rect x="0" y="0" width="3" height="3"/><rect x="10" y="0" width="3" height="3"/><rect x="0" y="10" width="3" height="3"/><rect x="4" y="4" width="4" height="4"/><rect x="17" y="4" width="4" height="4"/><rect x="4" y="17" width="4" height="4"/><rect x="17" y="17" width="4" height="4"/></g></svg>
<svg style="left:675px;top:242px" width="19" height="18" viewBox="0 0 19 18"><rect x="1.5" y="1.5" width="10" height="10" fill="none" stroke="#a2b1cb" stroke-width="1.4"/><rect x="6.5" y="6.5" width="11" height="10" fill="none" stroke="#a2b1cb" stroke-width="1.4"/><g fill="#a2b1cb"><rect x="0" y="0" width="3" height="3"/><rect x="10" y="0" width="3" height="3"/><rect x="0" y="10" width="3" height="3"/><rect x="16" y="7" width="3" height="3"/><rect x="6" y="15" width="3" height="3"/><rect x="16" y="15" width="3" height="3"/></g></svg>
<svg style="left:704px;top:241px" width="20" height="20" viewBox="0 0 20 20"><rect x="0.5" y="0.5" width="12" height="12" rx="2" fill="#a2b1cb" stroke="#8f99a6"/><rect x="6.5" y="6.5" width="13" height="13" rx="2" fill="#a2b1cb" stroke="#8f99a6"/></svg>
<svg style="left:734px;top:241px" width="19" height="19" viewBox="0 0 19 19"><rect x="0.5" y="0.5" width="12" height="12" rx="1" fill="#dde3ea" stroke="#8f99a6"/><rect x="5.5" y="5.5" width="13" height="13" rx="1" fill="#dde3ea" stroke="#8f99a6"/><rect x="6" y="6" width="6" height="6" fill="#a2b1cb"/></svg>
<svg style="left:763px;top:241px" width="19" height="20" viewBox="0 0 19 20"><rect x="0.5" y="0.5" width="12" height="12" rx="1" fill="#dde3ea" stroke="#8f99a6"/><rect x="5.5" y="6.5" width="13" height="13" rx="1.5" fill="#a2b1cb" stroke="#8f99a6"/></svg>
<svg style="left:792px;top:241px" width="19" height="19" viewBox="0 0 19 19"><rect x="0.5" y="0.5" width="12" height="12" rx="1" fill="#a2b1cb" stroke="#8f99a6"/><rect x="5.5" y="5.5" width="13" height="13" fill="#a2b1cb" stroke="#8f99a6"/><rect x="6" y="6" width="6" height="6" fill="#dde3ea"/></svg>
<svg style="left:843px;top:242px" width="21" height="18" viewBox="0 0 21 18"><rect x="0.5" y="0" width="2.5" height="18" fill="#e6e9ee" stroke="#8f99a6" stroke-width="0.6"/><rect x="3" y="1.5" width="17" height="6.5" fill="#a2b1cb" stroke="#8f99a6" stroke-width="0.6"/><rect x="3" y="9.5" width="9" height="6.5" fill="#a2b1cb" stroke="#8f99a6" stroke-width="0.6"/></svg>
<svg style="left:873px;top:241px" width="19" height="19" viewBox="0 0 19 19"><rect x="0.5" y="1.5" width="18" height="7" rx="1" fill="#a2b1cb" stroke="#8f99a6" stroke-width="0.6"/><rect x="4" y="11" width="11" height="7" fill="#a2b1cb" stroke="#8f99a6" stroke-width="0.6"/><path d="M9.5 0 V19" stroke="#8f99a6" stroke-width="0.8"/></svg>
<svg style="left:902px;top:242px" width="20" height="18" viewBox="0 0 20 18"><rect x="17" y="0" width="2.5" height="18" fill="#e6e9ee" stroke="#8f99a6" stroke-width="0.6"/><rect x="0" y="1.5" width="17" height="6.5" fill="#a2b1cb" stroke="#8f99a6" stroke-width="0.6"/><rect x="7" y="9.5" width="10" height="6.5" fill="#a2b1cb" stroke="#8f99a6" stroke-width="0.6"/></svg>
<svg style="left:934px;top:241px" width="15" height="20" viewBox="0 0 15 20"><rect x="0" y="0" width="15" height="2" fill="#e2e6ec"/><rect x="0.5" y="3" width="6" height="16.5" fill="#a2b1cb" stroke="#8f99a6" stroke-width="0.6"/><rect x="8.5" y="3" width="6" height="9" fill="#a2b1cb" stroke="#8f99a6" stroke-width="0.6"/></svg>
<svg style="left:961px;top:241px" width="20" height="20" viewBox="0 0 20 20"><rect x="1.5" y="0.5" width="7" height="19" fill="#a2b1cb" stroke="#8f99a6" stroke-width="0.7"/><rect x="10" y="4.5" width="8" height="11" fill="#a2b1cb" stroke="#8f99a6" stroke-width="0.7"/><path d="M0 10 H20" stroke="#8f99a6" stroke-width="0.8"/></svg>
<svg style="left:991px;top:241px" width="18" height="20" viewBox="0 0 18 20"><rect x="1" y="0.5" width="7" height="16" fill="#a2b1cb" stroke="#8f99a6" stroke-width="0.6"/><rect x="10" y="7" width="6" height="9.5" fill="#a2b1cb" stroke="#8f99a6" stroke-width="0.6"/><rect x="0" y="17.5" width="18" height="2.5" fill="#e2e6ec" stroke="#8f99a6" stroke-width="0.5"/></svg>
<svg style="left:1019px;top:241px" width="21" height="20" viewBox="0 0 21 20"><rect x="1" y="1" width="10" height="10" rx="1.5" fill="#e8e8e8" stroke="#2d4a87" stroke-width="1.3"/><rect x="10.5" y="10" width="9.5" height="9" rx="1.5" fill="#e8e8e8" stroke="#2d4a87" stroke-width="1.3"/><rect x="5" y="5" width="10" height="10" rx="1" fill="#2d4a87"/></svg>
<svg style="left:1048px;top:241px" width="21" height="20" viewBox="0 0 21 20"><rect x="6" y="6" width="10" height="10" fill="#e8e8e8" stroke="#2d4a87" stroke-width="1.3"/><rect x="0" y="0" width="10" height="10" rx="1.5" fill="#2d4a87"/><rect x="10" y="10" width="10" height="10" rx="1.5" fill="#2d4a87"/></svg>
<svg style="left:1078px;top:241px" width="20" height="20" viewBox="0 0 20 20"><rect x="6" y="6" width="13" height="13" rx="2" fill="#a2b1cb"/><rect x="0.5" y="0.5" width="11" height="11" rx="2" fill="#d8dfe8" stroke="#a2b1cb"/></svg>
<svg style="left:1107px;top:243px" width="21" height="14" viewBox="0 0 21 14"><path d="M0 7 L6 0.5 V4.5 H15 V0.5 L21 7 L15 13.5 V9.5 H6 V13.5 Z" fill="#2d4a87"/></svg>
<svg style="left:1139px;top:240px" width="13" height="22" viewBox="0 0 13 22"><path d="M6.5 0 L12.5 7 H8.5 V15 H12.5 L6.5 22 L0.5 15 H4.5 V7 H0.5 Z" fill="#2d4a87"/></svg>
<svg style="left:1165px;top:241px" width="22" height="19" viewBox="0 0 22 19"><path d="M12.5 16.4 H9.8 A7.2 7.2 0 1 1 15.6 5.3" fill="none" stroke="#2d4a87" stroke-width="2.7"/><path d="M12 7.5 H21 L16.6 14.5 Z" fill="#2d4a87"/></svg>
<svg style="left:1195px;top:246px" width="20" height="10" viewBox="0 0 20 10"><rect x="0" y="0" width="4" height="9" fill="#a2b1cb"/><rect x="7.5" y="0" width="4" height="9" fill="#a2b1cb"/><rect x="15" y="0" width="4" height="9" fill="#a2b1cb"/></svg>
<svg style="left:1232px;top:241px" width="5" height="20" viewBox="0 0 5 20"><rect x="0" y="0" width="4" height="4" fill="#a2b1cb"/><rect x="0" y="7.5" width="4" height="4" fill="#a2b1cb"/><rect x="0" y="15" width="4" height="4" fill="#a2b1cb"/></svg>
<svg style="left:1252px;top:240px" width="21" height="22" viewBox="0 0 21 22"><path d="M0 7 L7 12 L0 17 Z" fill="#2d4a87"/><path d="M20 7 L13 12 L20 17 Z" fill="none" stroke="#2d4a87" stroke-width="1.2"/><path d="M10 3 V22" stroke="#2d4a87" stroke-width="1" stroke-dasharray="1.5 1.5"/><path d="M5 4 Q10 -1 15 3" fill="none" stroke="#2d4a87" stroke-width="1.2"/><path d="M14 1 L17 4 L13.5 5 Z" fill="#2d4a87"/></svg>
<svg style="left:1282px;top:241px" width="22" height="21" viewBox="0 0 22 21"><path d="M2 0.5 H13 L7.5 7 Z" fill="#2d4a87"/><path d="M2 20.5 H13 L7.5 14 Z" fill="none" stroke="#2d4a87" stroke-width="1.2"/><path d="M0 10.5 H17" stroke="#2d4a87" stroke-width="1" stroke-dasharray="1.5 1.5"/><path d="M18 5 Q23 10 18 17" fill="none" stroke="#2d4a87" stroke-width="1.2"/><path d="M16 15 L18.5 18 L19.5 14 Z" fill="#2d4a87"/></svg>
<svg style="left:1315px;top:241px" width="15" height="19" viewBox="0 0 15 19"><path d="M3.5 8 V5 Q3.5 1 7.5 1 Q11.5 1 11.5 5 V8" fill="none" stroke="#2d4a87" stroke-width="1.8"/><rect x="1" y="7.5" width="13" height="10.5" fill="none" stroke="#2d4a87" stroke-width="1.8"/><circle cx="7.5" cy="12.5" r="1.3" fill="#2d4a87"/></svg>
<svg style="left:1342px;top:241px" width="20" height="19" viewBox="0 0 20 19"><path d="M11.5 8 V4.5 Q11.5 1 15 1 Q18.5 1 18.5 4.5 V6" fill="none" stroke="#a2b1cb" stroke-width="1.8"/><rect x="1" y="7.5" width="13" height="10.5" fill="none" stroke="#a2b1cb" stroke-width="1.8"/><circle cx="7.5" cy="12.5" r="1.2" fill="#a2b1cb"/></svg>
<svg style="left:1371px;top:241px" width="20" height="19" viewBox="0 0 20 19"><path d="M11.5 8 V4.5 Q11.5 1 15 1 Q18.5 1 18.5 4.5 V6" fill="none" stroke="#2d4a87" stroke-width="1.8"/><rect x="0.5" y="7" width="14" height="12" rx="1.5" fill="#2d4a87"/></svg>
<svg style="left:1399px;top:244px" width="22" height="13" viewBox="0 0 22 13"><path d="M0.5 6.5 Q11 -3 21.5 6.5 Q11 16 0.5 6.5 Z" fill="#2d4a87"/><path d="M11 3 L14.5 6.5 L11 10 L7.5 6.5 Z" fill="#cddcea"/><circle cx="11" cy="6.5" r="3.6" fill="none" stroke="#cddcea" stroke-width="1"/></svg>
<svg style="left:1428px;top:242px" width="22" height="17" viewBox="0 0 22 17"><path d="M0.5 8.5 Q11 -1 21.5 8.5 Q11 18 0.5 8.5 Z" fill="#2d4a87"/><path d="M3 16 L19 1" stroke="#cddcea" stroke-width="3"/><path d="M2.5 16.5 L19 1" stroke="#2d4a87" stroke-width="1.8"/></svg>
<div style="left:414px;top:276px;width:27px;height:27px;background:#9fc6ee"></div>
<svg style="left:421px;top:279px" width="15" height="21" viewBox="0 0 15 21"><path d="M1 1 V16 L4.5 12.5 L7.5 19 L10 18 L7 11.5 H12.5 Z" fill="#fff" stroke="#9fc6ee" stroke-width="0.6"/><path d="M7 14 L9 18" stroke="#666" stroke-width="0.8" stroke-dasharray="1 1"/></svg>
<svg style="left:420px;top:309px" width="14" height="19" viewBox="0 0 14 19"><path d="M1 1 V15 L4.5 11.5 L7.5 18 L10 17 L7 10.5 H12.5 Z" fill="#000"/></svg>
<svg style="left:417px;top:338px" width="19" height="20" viewBox="0 0 19 20"><path d="M5 11 V4 Q5 2.5 6.3 2.5 Q7.5 2.5 7.5 4 V9 V2.5 Q7.5 1 8.8 1 Q10 1 10 2.5 V9 V3 Q10 1.5 11.3 1.5 Q12.5 1.5 12.5 3 V9 V5 Q12.5 3.5 13.8 3.5 Q15 3.5 15 5 V13 Q15 19 9.5 19 Q6 19 4 16 L1.5 12 Q1 10.5 2.3 10.3 Q3.5 10 5 12" fill="#fff" stroke="#000" stroke-width="1.3" stroke-linejoin="round"/></svg>
<div style="left:415px;top:365px;width:25px;height:1px;background:#a9b4bf"></div>
<svg style="left:419px;top:375px" width="18" height="18" viewBox="0 0 18 18"><g fill="none" stroke="#2d4a87"><circle cx="9" cy="9" r="4.7" stroke-width="3.4"/><path d="M9 0.5 V17.5 M0.5 9 H17.5 M3 3 L15 15 M15 3 L3 15" stroke-width="3"/></g><circle cx="9" cy="9" r="2.3" fill="#cddcea"/></svg>
<div style="left:415px;top:401px;width:25px;height:1px;background:#a9b4bf"></div>
<div style="left:413px;top:405px;width:29px;height:25px;border:1px solid #8996a3;border-radius:5px;box-sizing:border-box"></div>
<div style="left:413px;top:432px;width:29px;height:25px;border:1px solid #8996a3;border-radius:5px;box-sizing:border-box"></div>
<div style="left:413px;top:459px;width:29px;height:25px;border:1px solid #8996a3;border-radius:5px;box-sizing:border-box"></div>
<div style="left:413px;top:492px;width:29px;height:25px;border:1px solid #8996a3;border-radius:5px;box-sizing:border-box"></div>
<svg style="left:419px;top:410px" width="17" height="14" viewBox="0 0 17 14"><rect x="1.2" y="1.2" width="14.6" height="11.6" fill="none" stroke="#2d4a87" stroke-width="2.4"/></svg>
<svg style="left:418px;top:436px" width="18" height="18" viewBox="0 0 18 18"><circle cx="9" cy="9" r="7.6" fill="none" stroke="#2d4a87" stroke-width="2"/></svg>
<svg style="left:417px;top:462px" width="20" height="19" viewBox="0 0 20 19"><path d="M5 2 L15 5 L18 15 L2 15 Z" fill="none" stroke="#2d4a87" stroke-width="1.6"/><g fill="#cddcea" stroke="#2d4a87" stroke-width="1.4"><circle cx="5" cy="2.5" r="1.8"/><circle cx="15" cy="5" r="1.8"/><circle cx="17.5" cy="15.5" r="1.8"/><circle cx="2.5" cy="15" r="1.8"/></g></svg>
<div style="left:415px;top:487px;width:25px;height:1px;background:#a9b4bf"></div>
<div style="left:415px;top:489px;width:25px;height:1px;background:#a9b4bf"></div>
<svg style="left:418px;top:496px" width="18" height="18" viewBox="0 0 18 18"><path d="M4 15 L3 7 L9 2 L15 7" fill="none" stroke="#2d4a87" stroke-width="1.6"/><g fill="#2d4a87"><circle cx="4" cy="15" r="1.8"/><circle cx="3" cy="7" r="1.8"/><circle cx="9" cy="2.5" r="1.8"/><circle cx="15" cy="7" r="1.8"/></g></svg>
<svg style="left:417px;top:524px" width="21" height="17" viewBox="0 0 21 17"><path d="M0 3.5 H15 M15 3.5 V16" stroke="#2d4a87" stroke-width="1.8"/><circle cx="15" cy="3.5" r="2.2" fill="#cddcea" stroke="#2d4a87" stroke-width="1.2"/></svg>
<div style="left:415px;top:550px;width:25px;height:1px;background:#a9b4bf"></div>
<svg style="left:417px;top:562px" width="21" height="15" viewBox="0 0 21 15"><rect x="1" y="1" width="19" height="13" rx="2" fill="none" stroke="#7e8fae" stroke-width="1"/><rect x="3" y="3" width="15" height="9" fill="#2d4a87"/></svg>
<svg style="left:416px;top:589px" width="22" height="19" viewBox="0 0 22 19"><rect x="0" y="0" width="16" height="13" fill="#2d4a87"/><path d="M18 3 V15.5 H4" fill="none" stroke="#2d4a87" stroke-width="2"/><path d="M20.5 6 V18 H6.5" fill="none" stroke="#2d4a87" stroke-width="1.5"/></svg>
<div style="left:415px;top:616px;width:25px;height:1px;background:#a9b4bf"></div>
<svg style="left:417px;top:624px" width="20" height="19" viewBox="0 0 20 19"><path d="M2 18 L10 1 L18 18 M5.5 12 H14.5" fill="none" stroke="#2d4a87" stroke-width="1.3"/><path d="M8 1 L15 18" stroke="#2d4a87" stroke-width="0.8"/><path d="M0 18 H5 M15 18 H20" stroke="#2d4a87" stroke-width="1.2"/></svg>
<svg style="left:417px;top:654px" width="20" height="20" viewBox="0 0 20 20"><rect x="0" y="0" width="20" height="20" fill="#2d4a87"/><path d="M3 17 L10 2 L17 17 M6 12 H14" fill="none" stroke="#fff" stroke-width="1.4"/><path d="M8 2 L14 17" stroke="#fff" stroke-width="0.8"/></svg>
<svg style="left:416px;top:685px" width="22" height="16" viewBox="0 0 22 16"><path d="M1 15 L4.5 5 L8 15 M2.2 11.5 H6.8" fill="none" stroke="#2d4a87" stroke-width="1.4"/><path d="M10 3 V15 M10 9.5 Q10 7 12.5 7 Q15 7 15 11 Q15 15 12.5 15 Q10 15 10 12.5" fill="none" stroke="#2d4a87" stroke-width="1.4"/><path d="M17.5 1 H21 M19.2 1 V15 M17.5 15 H21" stroke="#2d4a87" stroke-width="1.3"/></svg>
<div style="left:415px;top:710px;width:25px;height:1px;background:#a9b4bf"></div>
<div style="left:413px;top:716px;width:29px;height:25px;border:1px solid #8996a3;border-radius:5px;box-sizing:border-box"></div>
<div style="left:413px;top:742px;width:29px;height:25px;border:1px solid #a6b3c0;border-radius:5px;box-sizing:border-box"></div>
<div style="left:413px;top:768px;width:29px;height:25px;border:1px solid #a6b3c0;border-radius:5px;box-sizing:border-box"></div>
<svg style="left:417px;top:719px" width="21" height="19" viewBox="0 0 21 19"><path d="M1 9 L7 13 L1 17 Z M13 9 L7 13 L13 17 Z" fill="#2d4a87"/><path d="M7 13 V7" stroke="#2d4a87" stroke-width="1.6"/><path d="M14 1 V10 M9.5 5.5 H18.5" stroke="#16901e" stroke-width="2.6"/></svg>
<svg style="left:417px;top:745px" width="21" height="19" viewBox="0 0 21 19"><path d="M1 9 L7 13 L1 17 Z M13 9 L7 13 L13 17 Z" fill="#a3b3cf"/><path d="M7 13 V7" stroke="#a3b3cf" stroke-width="1.6"/><path d="M11 10 L18 2" stroke="#e8d890" stroke-width="2.2"/></svg>
<svg style="left:417px;top:771px" width="21" height="19" viewBox="0 0 21 19"><path d="M1 9 L7 13 L1 17 Z M13 9 L7 13 L13 17 Z" fill="#a3b3cf"/><path d="M7 13 V7" stroke="#a3b3cf" stroke-width="1.6"/><circle cx="13" cy="6" r="2.5" fill="none" stroke="#e0a8b8" stroke-width="1.2"/><circle cx="16" cy="3.5" r="2.5" fill="none" stroke="#e0a8b8" stroke-width="1.2"/></svg>
<div class="t" style="left:1650px;top:235.30px;font-size:15px;font-weight:bold">Drag Tags to Display</div>
<svg style="left:1845px;top:240px" width="31" height="12" viewBox="0 0 31 12"><path d="M12 1 L2 6 L12 11 M18 1 L28 6 L18 11" fill="none" stroke="#000" stroke-width="2.6"/></svg>
<svg style="left:1890px;top:233px" width="13" height="12" viewBox="0 0 13 12"><path d="M1.5 0.5 L11.5 11.5 M11.5 0.5 L1.5 11.5" stroke="#000" stroke-width="2.6"/></svg>
<div class="t" style="left:1650px;top:260.35px;font-size:15.3px;letter-spacing:0.4px">Tag.Motor</div>
<div style="left:1650px;top:280px;width:149px;height:82px;border:1px solid #c6d6ea;box-sizing:border-box"></div>
<svg style="left:1680px;top:291px" width="90" height="61" viewBox="0 0 90 61"><g fill="#9a9a9a" stroke="#777" stroke-width="0.9"><rect x="33.3" y="0.4" width="46.7" height="3.3"/><rect x="17" y="2.7" width="63" height="16.3"/><rect x="0.4" y="22.7" width="9" height="29"/><rect x="9.2" y="19" width="70.8" height="36.6"/><rect x="80" y="24.3" width="3" height="25.5"/><rect x="83" y="29" width="5.75" height="15.75"/><rect x="14.2" y="55.6" width="61.6" height="4.2"/><rect x="43.3" y="38" width="32.5" height="12.6"/></g><g stroke="#7a7a7a" stroke-width="1.2"><path d="M20.8 6.5 H38.8 M20.8 9 H38.8 M20.8 11.5 H38.8 M46 41.5 H73 M46 44.5 H73 M46 47.5 H73"/></g></svg>
<svg style="left:1800px;top:296px" width="19" height="18" viewBox="0 0 19 18"><defs><linearGradient id="rg" x1="0" y1="0" x2="0" y2="1"><stop offset="0" stop-color="#ff4a3a"/><stop offset="1" stop-color="#b80000"/></linearGradient></defs><rect x="0.5" y="0.5" width="18" height="17" rx="2" fill="url(#rg)" stroke="#e07060" stroke-width="0.8"/><path d="M5.5 5 L13.5 13 M13.5 5 L5.5 13" stroke="#fff2b8" stroke-width="3.4" stroke-linecap="round"/></svg>
<svg style="left:1799px;top:328px" width="21" height="21" viewBox="0 0 21 21"><path d="M1 10.5 L10 2 V6.5 H19.5 V14.5 H10 V19 Z" fill="#fff" stroke="#555" stroke-width="1.4" stroke-linejoin="round"/></svg>
<div style="left:1642px;top:366px;width:239px;height:31px;border:1px solid #7c8a99;border-radius:16px;box-sizing:border-box"></div>
<div class="t" style="left:1657px;top:373.88px;font-size:15.5px;font-style:italic;color:#7c8190">Filter for TagNames</div>
<svg style="left:1887px;top:370px" width="21" height="21" viewBox="0 0 21 21"><path d="M1 1 H20 L12.5 10 V20 L8.5 17.5 V10 Z" fill="none" stroke="#000" stroke-width="1.6" stroke-linejoin="round"/></svg>
<div style="left:1637px;top:401px;width:279px;height:135px;background:#f4f6fa;border:1px solid #8d98a4;box-sizing:border-box"></div>
<svg style="left:1637px;top:535px" width="279" height="5" viewBox="0 0 279 5"><defs><pattern id="dz" width="4" height="5" patternUnits="userSpaceOnUse"><rect width="4" height="5" fill="#f6f8fa"/><rect width="4" height="1" fill="#8a96a2"/><rect x="0.5" y="1" width="1.5" height="1.3" fill="#222"/><rect x="2" y="3" width="2" height="1.2" fill="#333"/><rect y="4.2" width="4" height="0.8" fill="#b0bcc8"/></pattern></defs><rect width="279" height="5" fill="url(#dz)"/></svg>
<div style="left:1666px;top:404px;width:223px;height:31px;background:#e2e8f1;border-radius:3px"></div>
<svg style="left:1641px;top:419px" width="12" height="7" viewBox="0 0 12 7"><path d="M0.5 0.5 H11.5 L6 6.5 Z" fill="#0000c8"/></svg>
<svg style="left:1676px;top:412px" width="16" height="18" viewBox="0 0 16 18"><path d="M1 12 L9 3 Q11 1 13 2 L15 4 Q16 6 14.5 8 L6 17 Z" fill="#f7d21c" stroke="#c89a10" stroke-width="0.8"/><circle cx="12" cy="5" r="1.2" fill="#fff"/></svg>
<div class="t" style="left:1698px;top:415.05px;font-size:15.3px;">[RootTags]</div>
<svg style="left:1852px;top:413px" width="22" height="18" viewBox="0 0 22 18"><path d="M0 2 H17 M0 8 H12 M0 14 H10" stroke="#2d4a87" stroke-width="2.4"/><circle cx="16.5" cy="12.5" r="5" fill="#2d4a87"/><path d="M13.5 12.5 H19.5" stroke="#fff" stroke-width="1.6"/></svg>
<svg style="left:1889px;top:406px" width="20" height="13" viewBox="0 0 20 13"><path d="M1 12.5 L10 0.5 L19 12.5 Z" fill="#a6a6e2"/></svg>
<div style="left:1897px;top:424px;width:11px;height:84px;background:#cddcea;border:2px solid #7a8898;border-radius:6px;box-sizing:border-box"></div>
<svg style="left:1889px;top:516px" width="20" height="13" viewBox="0 0 20 13"><path d="M1 0.5 L10 12.5 L19 0.5 Z" fill="#a6a6e2"/></svg>
<svg style="left:1888px;top:409px" width="19" height="20" viewBox="0 0 19 20"><path d="M3 8 A7 7 0 0 1 16 6" fill="none" stroke="#5b8fd8" stroke-width="2.6"/><path d="M16 12 A7 7 0 0 1 3 14" fill="none" stroke="#5b8fd8" stroke-width="2.6"/><path d="M13 2 L18 7 L12 8 Z M6 18 L1 13 L7 12 Z" fill="#5b8fd8"/></svg>
<div style="left:1690px;top:437px;width:201px;height:34px;background:#c3cedc;border:1px solid #8d98a4;border-radius:4px;box-sizing:border-box"></div>
<div style="left:1691px;top:473px;width:198px;height:31px;background:#e2e8f1;border-radius:3px"></div>
<div style="left:1691px;top:508px;width:198px;height:27px;background:#e2e8f1;border-radius:3px 3px 0 0"></div>
<svg style="left:1671px;top:449px" width="7" height="11" viewBox="0 0 7 11"><path d="M0.5 0.5 L6.5 5.5 L0.5 10.5 Z" fill="#0000c8"/></svg>
<svg style="left:1701px;top:448px" width="15" height="15" viewBox="0 0 15 15"><path d="M0.5 9 L7.5 2 H11 L13.5 4.5 V7 L6 14.5 Z" fill="#2d4a87"/><path d="M10 5 Q11 0 14 1.5 Q14.5 3 12.5 5" fill="none" stroke="#2d4a87" stroke-width="1"/></svg>
<div class="t" style="left:1723.4px;top:448.20px;font-size:16.3px;">Motor</div>
<svg style="left:1671px;top:484px" width="7" height="11" viewBox="0 0 7 11"><path d="M0.5 0.5 L6.5 5.5 L0.5 10.5 Z" fill="#0000c8"/></svg>
<svg style="left:1701px;top:483px" width="15" height="15" viewBox="0 0 15 15"><path d="M0.5 9 L7.5 2 H11 L13.5 4.5 V7 L6 14.5 Z" fill="#2d4a87"/><path d="M10 5 Q11 0 14 1.5 Q14.5 3 12.5 5" fill="none" stroke="#2d4a87" stroke-width="1"/></svg>
<div class="t" style="left:1723.4px;top:483.32px;font-size:15.8px;">Simulator</div>
<svg style="left:1671px;top:518px" width="7" height="11" viewBox="0 0 7 11"><path d="M0.5 0.5 L6.5 5.5 L0.5 10.5 Z" fill="#0000c8"/></svg>
<svg style="left:1701px;top:517px" width="15" height="15" viewBox="0 0 15 15"><path d="M0.5 9 L7.5 2 H11 L13.5 4.5 V7 L6 14.5 Z" fill="#2d4a87"/><path d="M10 5 Q11 0 14 1.5 Q14.5 3 12.5 5" fill="none" stroke="#2d4a87" stroke-width="1"/></svg>
<div class="t" style="left:1723.4px;top:518.07px;font-size:14.8px;">SolarPanel</div>
<div class="t" style="left:1650px;top:550.73px;font-size:15.2px;font-weight:bold">Drawing Properties</div>
<div style="left:1638px;top:576px;width:277px;height:65px;border:2px solid #8d98a4;box-sizing:border-box"></div>
<div class="t" style="left:1642px;top:584.68px;font-size:14.9px;font-weight:bold">Rectangle</div>
<div class="t" style="left:1642px;top:614.48px;font-size:15.5px;">Uid:</div>
<div style="left:1679px;top:606px;width:221px;height:27px;background:#fff;border:1px solid #8d98a4;border-radius:4px;box-sizing:border-box"></div>
<div style="left:1663px;top:645px;width:251px;height:24px;background:#e0e7f1"></div>
<div style="left:1639px;top:645px;width:24px;height:24px;background:#cddcea;border:1px solid #7d8a98;border-radius:3px;box-sizing:border-box"></div>
<svg style="left:1645px;top:654px" width="12" height="7" viewBox="0 0 12 7"><path d="M0.5 0.5 H11.5 L6 6.5 Z" fill="#0000c8"/></svg>
<div class="t" style="left:1670px;top:650.30px;font-size:15px;font-weight:bold">Appearance</div>
<div style="left:1663px;top:673px;width:251px;height:24px;background:#e0e7f1"></div>
<div style="left:1639px;top:673px;width:24px;height:24px;background:#cddcea;border:1px solid #7d8a98;border-radius:3px;box-sizing:border-box"></div>
<svg style="left:1645px;top:682px" width="12" height="7" viewBox="0 0 12 7"><path d="M0.5 0.5 H11.5 L6 6.5 Z" fill="#0000c8"/></svg>
<div class="t" style="left:1670px;top:678.30px;font-size:15px;font-weight:bold">Connections</div>
<div style="left:1663px;top:701px;width:251px;height:24px;background:#e0e7f1"></div>
<div style="left:1639px;top:701px;width:24px;height:24px;background:#cddcea;border:1px solid #7d8a98;border-radius:3px;box-sizing:border-box"></div>
<svg style="left:1645px;top:710px" width="12" height="7" viewBox="0 0 12 7"><path d="M0.5 0.5 H11.5 L6 6.5 Z" fill="#0000c8"/></svg>
<div class="t" style="left:1670px;top:706.30px;font-size:15px;font-weight:bold">Layout</div>
<div style="left:1663px;top:730px;width:251px;height:24px;background:#e0e7f1"></div>
<div style="left:1639px;top:730px;width:24px;height:24px;background:#cddcea;border:1px solid #7d8a98;border-radius:3px;box-sizing:border-box"></div>
<svg style="left:1645px;top:739px" width="12" height="7" viewBox="0 0 12 7"><path d="M0.5 0.5 H11.5 L6 6.5 Z" fill="#0000c8"/></svg>
<div class="t" style="left:1670px;top:735.30px;font-size:15px;font-weight:bold">Transform</div>
<div style="left:1663px;top:758px;width:251px;height:24px;background:#e0e7f1"></div>
<div style="left:1639px;top:758px;width:24px;height:24px;background:#cddcea;border:1px solid #7d8a98;border-radius:3px;box-sizing:border-box"></div>
<svg style="left:1645px;top:767px" width="12" height="7" viewBox="0 0 12 7"><path d="M0.5 0.5 H11.5 L6 6.5 Z" fill="#0000c8"/></svg>
<div class="t" style="left:1670px;top:763.80px;font-size:15px;font-weight:bold">Border Radius</div>
<div style="left:1663px;top:787px;width:251px;height:24px;background:#e0e7f1"></div>
<div style="left:1639px;top:787px;width:24px;height:24px;background:#cddcea;border:1px solid #7d8a98;border-radius:3px;box-sizing:border-box"></div>
<svg style="left:1645px;top:796px" width="12" height="7" viewBox="0 0 12 7"><path d="M0.5 0.5 H11.5 L6 6.5 Z" fill="#0000c8"/></svg>
<div class="t" style="left:1670px;top:792.60px;font-size:15px;font-weight:bold">Dynamics</div>
<div style="left:1663px;top:817px;width:251px;height:24px;background:#e0e7f1"></div>
<div style="left:1639px;top:817px;width:24px;height:24px;background:#cddcea;border:1px solid #7d8a98;border-radius:3px;box-sizing:border-box"></div>
<svg style="left:1645px;top:826px" width="12" height="7" viewBox="0 0 12 7"><path d="M0.5 0.5 H11.5 L6 6.5 Z" fill="#0000c8"/></svg>
<div class="t" style="left:1670px;top:822.00px;font-size:15px;font-weight:bold">Replace Tags/Strings</div>
<div style="left:1639px;top:846px;width:275px;height:23px;background:#87cdf9;border:1px solid #6f8799;border-radius:3px;box-sizing:border-box"></div>
<svg style="left:1645px;top:854px" width="12" height="7" viewBox="0 0 12 7"><path d="M0.5 6.5 L6 0.5 L11.5 6.5 Z" fill="#0000c8"/></svg>
<div class="t" style="left:1670px;top:851.30px;font-size:15px;font-weight:bold">Draw Tool Options</div>
<div style="left:1663px;top:956px;width:251px;height:24px;background:#e0e7f1"></div>
<div style="left:1639px;top:956px;width:24px;height:24px;background:#cddcea;border:1px solid #7d8a98;border-radius:3px;box-sizing:border-box"></div>
<svg style="left:1645px;top:965px" width="12" height="7" viewBox="0 0 12 7"><path d="M0.5 0.5 H11.5 L6 6.5 Z" fill="#0000c8"/></svg>
<div class="t" style="left:1670px;top:961.80px;font-size:15px;font-weight:bold">Display Settings</div>
<div style="left:1639px;top:872px;width:276px;height:79px;background:#e6ecf4;border:1px solid #8d98a4;border-radius:5px;box-sizing:border-box"></div>
<div style="left:1648px;top:884px;width:19px;height:17px;background:#fff;border:1px solid #6f7a86;box-sizing:border-box"></div>
<svg style="left:1650px;top:885px" width="15" height="15" viewBox="0 0 15 15"><path d="M2.5 8 L6 12.5 L13 1.5" fill="none" stroke="#0000c8" stroke-width="2.2"/></svg>
<div class="t" style="left:1674px;top:885.92px;font-size:15.8px;">Highlight Search Location</div>
<div style="left:1648px;top:920px;width:19px;height:19px;background:#fff;border:1px solid #6f7a86;box-sizing:border-box"></div>
<div class="t" style="left:1674px;top:922.79px;font-size:15.6px;">Apply Shadow on TextBlocks</div>
<svg style="left:7px;top:989px" width="19" height="20" viewBox="0 0 19 20"><path d="M1 1 H18 L11 9 V19 L8 16.5 V9 Z" fill="none" stroke="#000" stroke-width="1.8" stroke-linejoin="round"/></svg>
<div style="left:5px;top:1021px;width:38px;height:2px;background:#7a8898"></div>
<div style="left:56px;top:994px;width:130px;height:29px;background:#cddcea;border:1px solid #8d98a4;border-radius:4px;box-sizing:border-box"></div>
<div style="left:60px;top:998px;width:20px;height:21px;background:#cddcea;border:1px solid #7d8a98;border-radius:3px;box-sizing:border-box"></div>
<svg style="left:65px;top:1006px" width="11" height="7" viewBox="0 0 11 7"><path d="M0.5 6.5 L5.5 0.5 L10.5 6.5 Z" fill="#0000c8"/></svg>
<div class="t" style="left:88.5px;top:1000.50px;font-size:16.3px;">Output</div>
<div style="left:196px;top:994px;width:130px;height:29px;background:#cddcea;border:1px solid #8d98a4;border-radius:4px;box-sizing:border-box"></div>
<div style="left:200px;top:998px;width:20px;height:21px;background:#cddcea;border:1px solid #7d8a98;border-radius:3px;box-sizing:border-box"></div>
<svg style="left:205px;top:1006px" width="11" height="7" viewBox="0 0 11 7"><path d="M0.5 6.5 L5.5 0.5 L10.5 6.5 Z" fill="#0000c8"/></svg>
<div class="t" style="left:228px;top:1001.60px;font-size:15px;">Find Results</div>
<svg style="left:1699px;top:996px" width="24" height="24" viewBox="0 0 24 24"><g fill="#c8c8c8" stroke="#8a8a8a" stroke-width="2"><rect x="2" y="8.5" width="10" height="8" rx="4"/><rect x="12" y="8.5" width="10" height="8" rx="4"/></g><path d="M5 12.5 H10 M14 12.5 H19" stroke="#eee" stroke-width="1.2"/><path d="M11.8 3 V23 M4.5 1.2 L11.8 7.8 L18.5 1.2 M5.5 23 L11.8 17 L17.5 23" fill="none" stroke="#ff2424" stroke-width="1.3"/></svg>
<div class="t" style="left:1726.5px;top:1002.13px;font-size:15.2px;font-weight:bold;color:#1a1a8c">Production offline config</div>
</body></html>
